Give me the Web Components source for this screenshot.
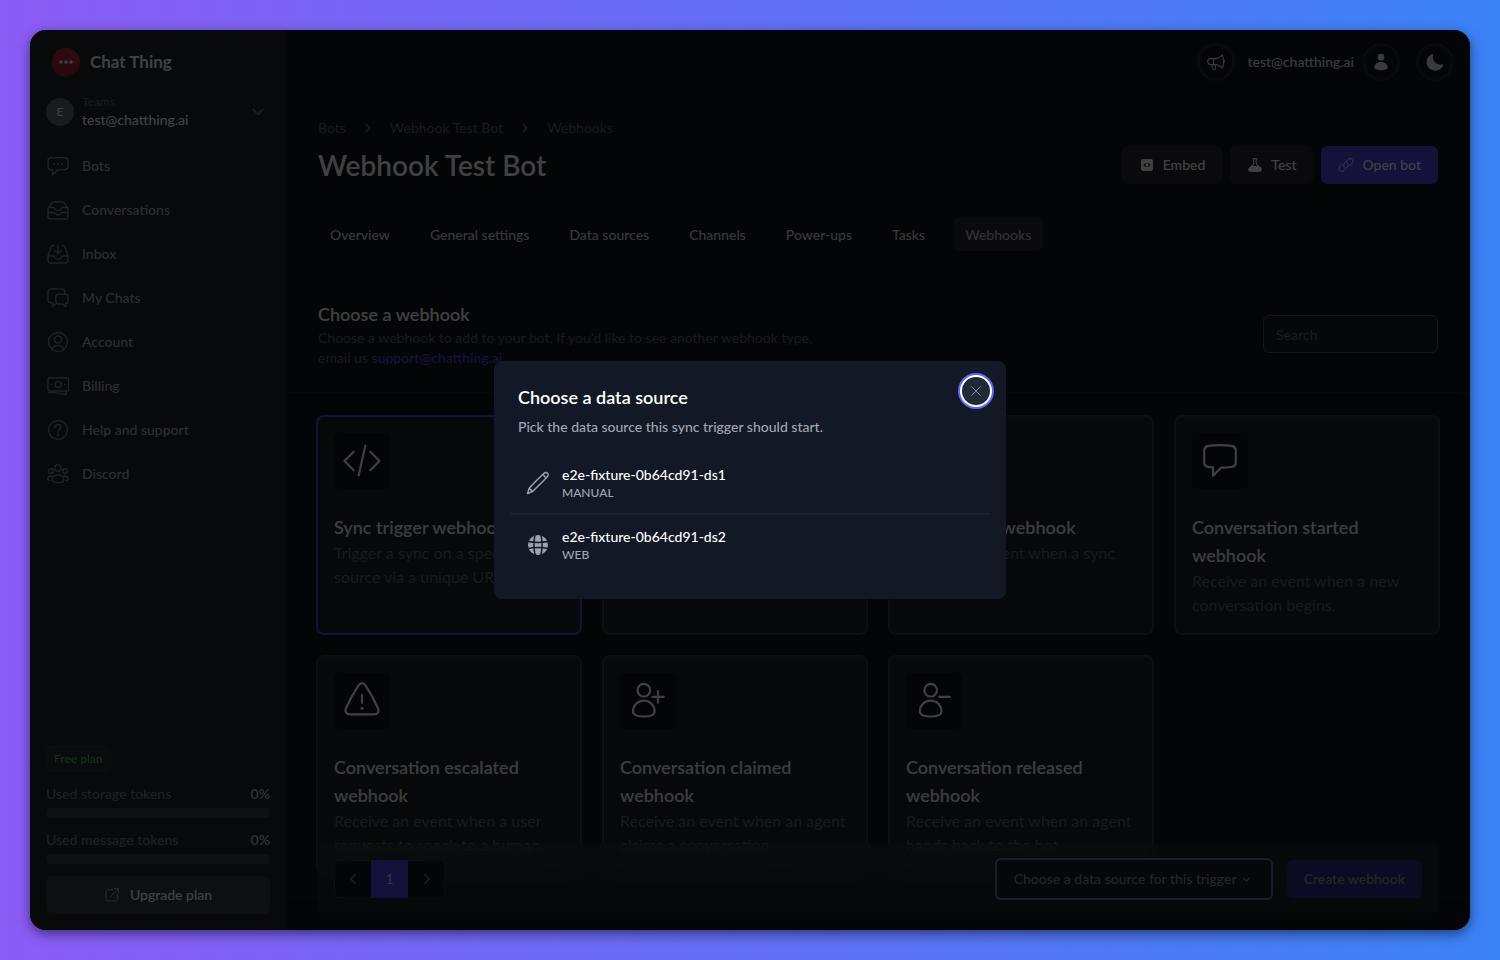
<!DOCTYPE html>
<html lang="en">
<head>
<meta charset="utf-8">
<title>Webhook Test Bot - Chat Thing</title>
<style>
  body {
    --page: #10141e;
    --panel: #20242f;
    --line: #34383f;
    --button: #3b3e46;
    --text: #fff;
    --soft: #b4b5b9;
    --muted: #7c7e85;
    --faint: #62646b;
    --brand: #5044e5;
    margin: 0;
    min-height: 100vh;
    box-sizing: border-box;
    padding: 30px;
    background: linear-gradient(to right, #8b5cf6, #3b82f6);
    font: 500 14px/20px Lato, sans-serif;
    color: var(--text);
  }
</style>
</head>
<body>
<chat-app></chat-app>

<script>
const ICONS = {
  bots: '<path d="M12 3.500c-3 0-5.500.1-7.200.3C3.200 4 2 5.200 2 6.800v5.800c0 1.700 1.200 2.900 2.800 3l1.700.2v5.200l4.900-5c2.900 0 5.600-.1 7.800-.4 1.600-.2 2.800-1.400 2.800-3V6.800c0-1.600-1.200-2.800-2.800-3C17.500 3.600 15 3.500 12 3.500z"/><path d="M8 10h.01M12 10h.01M16 10h.01" stroke-width="2"/>',
  conversations: '<path d="M2.500 9.500 6.500 4.500C7 4 7.500 4 8 4h8c.5 0 1 0 1.500.5l4 5M2.500 9.500h5c.8 0 1.300.5 1.600 1.200.5 1.100 1.500 1.800 2.900 1.800s2.400-.7 2.900-1.800c.3-.7.8-1.200 1.600-1.200h5M2 14.500h5.500c.8 0 1.300.5 1.600 1 .6.900 1.500 1.500 2.900 1.500s2.300-.6 2.900-1.500c.3-.5.8-1 1.600-1H22M2 10v8.500A2.500 2.500 0 0 0 4.500 21h15a2.500 2.500 0 0 0 2.500-2.500V10"/>',
  inbox: '<path d="M8 3.500H7c-1 0-1.500.5-1.800 1.300L2 14v4.500A2.500 2.500 0 0 0 4.500 21h15a2.500 2.500 0 0 0 2.500-2.500V14l-3.200-9.200C18.500 4 18 3.500 17 3.500h-1M2 14h5c.8 0 1.300.5 1.600 1.200.6 1.200 1.600 2 3.400 2s2.800-.8 3.400-2c.3-.7.8-1.200 1.600-1.200h5M12 3v8.500M8.800 8.500l3.200 3 3.200-3"/>',
  chats: '<path d="M9.500 18 7 20.500V17c-1 0-1.800 0-2.600-.2C3 16.600 2 15.500 2 14V5.800c0-1.400 1-2.500 2.400-2.700 4-.5 8-.5 12 0 1.400.2 2.400 1.300 2.400 2.700v2"/><path d="M12.500 8.200h7c1.400 0 2.500 1 2.500 2.500v4.600c0 1.500-1 2.500-2.500 2.600v2.800l-3-2.700h-3.800c-1.700 0-2.900-1-2.900-2.700v-4.400c0-1.600 1.100-2.700 2.700-2.700z"/>',
  account: '<circle cx="12" cy="12" r="9.500"/><circle cx="12" cy="9.500" r="3.500"/><path d="M5.800 19c1-2.400 3.300-3.400 6.200-3.400s5.200 1 6.200 3.400"/>',
  billing: '<rect x="2" y="4" width="20.500" height="13" rx="1.500"/><circle cx="12.200" cy="10.500" r="3"/><path d="M5.500 10.500h.6M18.500 10.500h.6M2.500 18.500c6-.5 11 .5 16 2 1 .3 1.500-.2 1.500-1v-2"/>',
  help: '<circle cx="12" cy="12" r="9.500"/><path d="M9 9.500c0-1.800 1.300-3 3-3s3 1.100 3 2.700c0 2.300-3 2.500-3 5"/><path d="M12 17.300h.01" stroke-width="2"/>',
  discord: '<circle cx="12" cy="6" r="3.200"/><circle cx="5" cy="9" r="2.300"/><circle cx="19" cy="9" r="2.300"/><path d="M6.300 18.300c0-3.300 2.400-5.600 5.700-5.600s5.700 2.300 5.700 5.600c0 1.400-2.500 2.300-5.700 2.300s-5.700-.9-5.700-2.300zM6 14.200c-2.300-.6-4.300.6-4.300 2.800 0 .8.800 1.300 2.200 1.500M18 14.200c2.300-.6 4.300.6 4.300 2.800 0 .8-.8 1.300-2.200 1.500"/>',
  external: '<path d="M13 4H5.500C4.200 4 3 5.200 3 6.500v12C3 19.800 4.200 21 5.500 21h12c1.300 0 2.500-1.200 2.500-2.500V11M9 15 21.500 2.500M15.500 2.500h6v6"/>',
  down: '<path d="m4 8 8 8 8-8"/>',
  right: '<path d="m8 4 8 8-8 8"/>',
  left: '<path d="m16 4-8 8 8 8"/>',
  close: '<path d="M3 3 21 21M21 3 3 21"/>',
  horn: '<path d="M5 7.500h5.500c4 0 7-1.800 10-5 1.800 5 1.800 12.500 0 17.500-3-3-6-4.500-10-4.500H5c-2.200 0-4-1.700-4-4s1.800-4 4-4zM9.500 7.500c-1 2.500-1 5.500 0 8M6.500 15.800l1.300 5c.3 1.200 1.200 1.900 2.400 1.600 1.100-.3 1.600-1.300 1.300-2.400l-1-4.200M22 8.500c1.500 1 1.500 4 0 5"/>',
  person: '<g fill="currentColor" stroke="none"><circle cx="12" cy="5.500" r="4.500"/><path d="M12 12c5 0 9 3.400 9 7 0 2.500-4 4-9 4s-9-1.500-9-4c0-3.600 4-7 9-7z"/></g>',
  moon: '<path fill="currentColor" stroke="none" d="M9.500 1A11.500 11.500 0 1 0 23.500 14.500C17 18 6.500 12 9.500 1z"/>',
  embed: '<path fill="currentColor" stroke="none" fill-rule="evenodd" d="M6 3h12c1.700 0 3 1.300 3 3v12c0 1.700-1.300 3-3 3H6c-1.700 0-3-1.300-3-3V6c0-1.700 1.300-3 3-3zm4 5.500L6.500 12l3.500 3.500 1.300-1.300L9.100 12l2.200-2.200zm4 0-1.300 1.300 2.200 2.200-2.200 2.200 1.300 1.300 3.500-3.500z"/>',
  flask: '<path fill="currentColor" stroke="none" fill-rule="evenodd" d="M8 2h8v1.500h-1.500V9c1 3 3.500 4 6.500 7 2.500 3 1.500 5.500-2 6-4.500.6-9.500.6-14 0-3.500-.5-4.500-3-2-6 3-3 5.500-4 6.500-7V3.500H8zm3 1.500V9c-.4 1.700-1.300 3.200-2.500 4.500h7C14.300 12.200 13.400 10.700 13 9V3.500z"/>',
  link: '<path d="M10 15.500c-2-1.800-2-4.200-.2-6.200l5-5.300c1.900-2 4.500-2.200 6.300-.5s1.800 4.300-.2 6.300l-3.300 3.400M14 8.500c2 1.800 2 4.200.2 6.200l-5 5.300c-1.900 2-4.500 2.200-6.300.5s-1.800-4.300.2-6.300l3.300-3.400"/>',
  code: '<path d="M7 6.500 1.500 12 7 17.500M17 6.500l5.500 5.500-5.500 5.500M14 2.800 10 20.500"/>',
  bubble: '<path d="M12 2.500c-3 0-5 .1-6.800.4-1.700.2-2.700 1.300-2.700 2.900v6.900c0 1.600 1.100 2.700 2.700 2.900l2.600.2v5l4.800-4.800c2.500 0 4.300-.1 6.200-.4 1.600-.2 2.700-1.300 2.700-2.900V5.800c0-1.600-1-2.700-2.700-2.900C17 2.600 15 2.500 12 2.500z"/>',
  warning: '<path d="M10 2.500c.9-1.400 3.100-1.400 4 0 3 4.500 5.500 9.200 7.700 14 .7 1.800-.4 3.500-2.400 3.500H4.700c-2 0-3.100-1.700-2.400-3.500 2.200-4.800 4.700-9.500 7.700-14zM12 8.500v4.700"/><path d="M12 16.300h.01" stroke-width="1.800"/>',
  userplus: '<circle cx="9.500" cy="5.500" r="3.800"/><path d="M9.500 11.800c4 0 6.500 3.200 6.500 6.500 0 2-2.800 3-6.500 3s-6.500-1-6.500-3c0-3.300 2.500-6.500 6.500-6.500zM18 6v7M14.700 9.500h6.800"/>',
  userminus: '<circle cx="10" cy="5.500" r="3.800"/><path d="M10 11.800c4 0 6.500 3.200 6.500 6.500 0 2-2.800 3-6.500 3s-6.500-1-6.500-3c0-3.300 2.500-6.500 6.500-6.500zM15.200 9.500h6.300"/>',
  pencil: '<path d="M1.500 22.500 3 17.500C8 12 12.500 7.500 18 2.200c1.200-1.100 2.700-.9 3.500 0s1 2.200 0 3.300C16 11.500 11.500 16 6.500 20.500zM17.800 2.800c-.6 1.800 1 3.800 3 3.300M3 17.500c1 .5 2.500 1.700 3.500 3"/>',
  globe: '<circle cx="12" cy="12" r="10" fill="currentColor" stroke="none"/><path stroke="#121825" stroke-width="1.500" d="M9.300 1c-1.800 7-1.800 15 0 22M14.700 1c1.800 7 1.800 15 0 22M1 8.300c7 1.500 15 1.500 22 0M1 15.700c7-1.500 15-1.500 22 0"/>',
};

class AppIcon extends HTMLElement {
  constructor() {
    super();
    this.attachShadow({mode: 'open'});
  }

  connectedCallback() {
    this.shadowRoot.innerHTML = `
      <style>
        :host {
          display: inline-flex;
          flex: none;
          width: var(--icon-size, 24px);
          height: var(--icon-size, 24px);
        }
        svg {
          width: 100%;
          height: 100%;
          overflow: visible;
          fill: none;
          stroke: currentColor;
          stroke-width: var(--icon-stroke, 1.400);
          stroke-linecap: round;
          stroke-linejoin: round;
        }
      </style>
      <svg viewBox="0 0 24 24" aria-hidden="true">${ICONS[this.getAttribute('name')]}</svg>
    `;
  }
}
customElements.define('app-icon', AppIcon);

class NavItem extends HTMLElement {
  constructor() {
    super();
    this.attachShadow({mode: 'open'}).innerHTML = `
      <style>
        :host { display: block; }
        a {
          display: flex;
          align-items: center;
          gap: 12px;
          height: 44px;
          color: var(--soft);
          text-decoration: none;
        }
        app-icon { color: #84868d; }
      </style>
      <a href="#"><app-icon name="${this.getAttribute('icon')}"></app-icon><slot></slot></a>
    `;
  }
}
customElements.define('nav-item', NavItem);

class UsageMeter extends HTMLElement {
  constructor() {
    super();
    this.attachShadow({mode: 'open'}).innerHTML = `
      <style>
        :host { display: block; }
        .row {
          display: flex;
          justify-content: space-between;
          color: var(--muted);
          margin-bottom: 4px;
        }
        b { color: #c4c4c6; font-weight: 600; }
        .track {
          height: 10px;
          border-radius: 4px;
          background: var(--button);
        }
      </style>
      <div class="row"><span id="label"><slot></slot></span><b>0%</b></div>
      <div class="track" role="progressbar" aria-labelledby="label" aria-valuenow="0"></div>
    `;
  }
}
customElements.define('usage-meter', UsageMeter);

class AppButton extends HTMLElement {
  constructor() {
    super();
    this.attachShadow({mode: 'open'}).innerHTML = `
      <style>
        :host {
          display: block;
          --icon-size: 16px;
        }
        button {
          display: flex;
          align-items: center;
          justify-content: center;
          gap: 8px;
          width: 100%;
          height: 38px;
          padding: 0 17px;
          border: 0;
          border-radius: 6px;
          background: #282b33;
          color: var(--text);
          font: inherit;
          white-space: nowrap;
        }
        :host([kind="brand"]) button { background: var(--brand); }
        :host([kind="off"]) button { background: #34288a; color: #9a9a9e; }
        :host([kind="wide"]) button { background: var(--button); gap: 10px; }
      </style>
      <button type="button"><slot></slot></button>
    `;
  }
}
customElements.define('app-button', AppButton);

class SideBar extends HTMLElement {
  constructor() {
    super();
    this.attachShadow({mode: 'open'}).innerHTML = `
      <style>
        :host {
          display: flex;
          flex-direction: column;
          flex: none;
          box-sizing: border-box;
          width: 256px;
          padding: 16px;
          background: var(--panel);
        }
        .brand {
          display: flex;
          align-items: center;
          gap: 8px;
          height: 32px;
          padding-left: 4px;
          font-size: 17px;
          font-weight: 700;
        }
        .brand svg { width: 32px; height: 32px; }
        .team {
          display: flex;
          align-items: center;
          gap: 8px;
          height: 36px;
          margin: 16px 0 14px;
          padding: 0 5px 0 0;
          border: 0;
          background: none;
          color: var(--text);
          font: inherit;
          text-align: left;
          --icon-size: 14px;
          --icon-stroke: 3;
        }
        .team app-icon { margin-left: auto; color: #76787f; }
        .avatar {
          display: grid;
          place-items: center;
          width: 28px;
          height: 28px;
          border-radius: 50%;
          background: #686b73;
          font-size: 12px;
        }
        small {
          display: block;
          font-size: 12px;
          line-height: 16px;
          color: var(--faint);
        }
        .plan {
          align-self: flex-start;
          margin-top: auto;
          padding: 1px 7px;
          border: 1px solid #1c4a34;
          border-radius: 6px;
          background: #233133;
          color: #5fbb6c;
          font-size: 12px;
          line-height: 22px;
        }
        usage-meter { margin-top: 12px; }
        app-button { margin-top: 12px; }
        app-button app-icon { color: #b0b0b4; }
      </style>
      <div class="brand">
        <svg viewBox="0 0 32 32" aria-hidden="true">
          <defs>
            <linearGradient id="blob" x1="0" y1="1" x2="1" y2="0">
              <stop offset="0" stop-color="#a02048"/>
              <stop offset="1" stop-color="#b83038"/>
            </linearGradient>
          </defs>
          <path fill="#8c2034" opacity=".3" d="M17 4c8 0 14 6 14 13s-5 14-13 14S4 25 4 18 9 4 17 4z"/>
          <path fill="url(#blob)" d="M14 2c8-1.500 15 5 16 13 0 8-5 14-13 15C9 31 2 26 2 18 1 9 7 3 14 2z"/>
          <g fill="#fff"><circle cx="11" cy="16" r="1.700"/><circle cx="16" cy="16" r="1.700"/><circle cx="21" cy="16" r="1.700"/></g>
        </svg>
        Chat Thing
      </div>
      <button class="team" type="button">
        <span class="avatar">E</span>
        <span><small>Teams</small>test@chatthing.ai</span>
        <app-icon name="down"></app-icon>
      </button>
      <nav>
        <nav-item icon="bots">Bots</nav-item>
        <nav-item icon="conversations">Conversations</nav-item>
        <nav-item icon="inbox">Inbox</nav-item>
        <nav-item icon="chats">My Chats</nav-item>
        <nav-item icon="account">Account</nav-item>
        <nav-item icon="billing">Billing</nav-item>
        <nav-item icon="help">Help and support</nav-item>
        <nav-item icon="discord">Discord</nav-item>
      </nav>
      <span class="plan">Free plan</span>
      <usage-meter>Used storage tokens</usage-meter>
      <usage-meter>Used message tokens</usage-meter>
      <app-button kind="wide"><app-icon name="external"></app-icon>Upgrade plan</app-button>
    `;
  }
}
customElements.define('side-bar', SideBar);

class TopBar extends HTMLElement {
  constructor() {
    super();
    this.attachShadow({mode: 'open'}).innerHTML = `
      <style>
        :host {
          display: flex;
          align-items: center;
          justify-content: flex-end;
          height: 64px;
          padding: 0 16px;
          color: #e8e8ea;
          --icon-size: 18px;
        }
        button {
          display: grid;
          place-items: center;
          width: 38px;
          height: 38px;
          padding: 0;
          border: 3px solid #282a31;
          border-radius: 50%;
          background: none;
          color: inherit;
        }
        span { margin: 0 8px 0 13px; }
        .theme { margin-left: 16px; }
      </style>
      <button type="button" aria-label="News"><app-icon name="horn"></app-icon></button>
      <span>test@chatthing.ai</span>
      <button type="button" aria-label="Profile"><app-icon name="person"></app-icon></button>
      <button class="theme" type="button" aria-label="Theme"><app-icon name="moon"></app-icon></button>
    `;
  }
}
customElements.define('top-bar', TopBar);

class PageHead extends HTMLElement {
  constructor() {
    super();
    this.attachShadow({mode: 'open'}).innerHTML = `
      <style>
        :host {
          display: block;
          padding: 24px 32px 0;
        }
        a { color: inherit; text-decoration: none; }
        .crumbs {
          display: flex;
          align-items: center;
          gap: 16px;
          color: var(--faint);
          font-weight: 400;
          --icon-size: 12px;
          --icon-stroke: 2.500;
        }
        .crumbs app-icon { color: var(--muted); }
        .title {
          display: flex;
          align-items: center;
          gap: 8px;
          margin-top: 8px;
        }
        h1 {
          margin: 0 auto 0 0;
          font-size: 28px;
          line-height: 36px;
          font-weight: 600;
        }
        .tabs {
          display: flex;
          gap: 16px;
          margin-top: 34px;
        }
        .tabs a {
          padding: 6px 12px;
          border-radius: 6px;
          color: #dadadc;
          line-height: 21px;
        }
        .tabs a[aria-current] { background: #282b33; color: #c0c1c4; }
      </style>
      <nav class="crumbs" aria-label="Breadcrumb">
        <a href="#">Bots</a><app-icon name="right"></app-icon>
        <a href="#">Webhook Test Bot</a><app-icon name="right"></app-icon>
        <a href="#">Webhooks</a>
      </nav>
      <div class="title">
        <h1>Webhook Test Bot</h1>
        <app-button><app-icon name="embed"></app-icon>Embed</app-button>
        <app-button><app-icon name="flask"></app-icon>Test</app-button>
        <app-button kind="brand"><app-icon name="link"></app-icon>Open bot</app-button>
      </div>
      <nav class="tabs" aria-label="Bot">
        <a href="#">Overview</a>
        <a href="#">General settings</a>
        <a href="#">Data sources</a>
        <a href="#">Channels</a>
        <a href="#">Power-ups</a>
        <a href="#">Tasks</a>
        <a href="#" aria-current="page">Webhooks</a>
      </nav>
    `;
  }
}
customElements.define('page-head', PageHead);

class WebhookCard extends HTMLElement {
  constructor() {
    super();
    this.attachShadow({mode: 'open'}).innerHTML = `
      <style>
        :host {
          display: block;
          padding: 16px;
          border-radius: 6px;
          background: #1e212a;
          box-shadow: 0 0 0 2px var(--line);
        }
        :host([selected]) { box-shadow: 0 0 0 2px var(--brand); }
        .icon {
          display: grid;
          place-items: center;
          width: 56px;
          height: 56px;
          border-radius: 6px;
          background: #11141b;
          --icon-size: 40px;
          --icon-stroke: 1.300;
        }
        h3 {
          margin: 24px 0 0;
          font-size: 18px;
          line-height: 28px;
          font-weight: 600;
          color: #f0f0f2;
        }
        p {
          margin: 0;
          font-size: 16px;
          line-height: 24px;
          font-weight: 400;
          color: var(--faint);
        }
      </style>
      <div class="icon"><app-icon name="${this.getAttribute('icon')}"></app-icon></div>
      <h3><slot name="title"></slot></h3>
      <p><slot></slot></p>
    `;
  }
}
customElements.define('webhook-card', WebhookCard);

class WebhookPicker extends HTMLElement {
  constructor() {
    super();
    this.attachShadow({mode: 'open'}).innerHTML = `
      <style>
        :host { display: block; }
        header {
          display: flex;
          align-items: center;
          justify-content: space-between;
          padding: 49px 32px 24px;
        }
        h2 {
          margin: 0;
          font-size: 18px;
          line-height: 28px;
          font-weight: 600;
        }
        header p {
          max-width: 512px;
          margin: 0;
          font-weight: 400;
          color: var(--faint);
        }
        header a { color: #5347e6; font-weight: 500; text-decoration: none; }
        input {
          box-sizing: border-box;
          width: 175px;
          height: 38px;
          padding: 0 12px;
          border: 1px solid #555861;
          border-radius: 6px;
          background: #1a1d25;
          color: var(--text);
          font: inherit;
        }
        input::placeholder { color: var(--faint); }
        .grid {
          display: grid;
          grid-template-columns: repeat(4, 1fr);
          gap: 24px;
          padding: 24px 32px;
          border: solid #20232b;
          border-width: 1px 0;
        }
      </style>
      <header>
        <div>
          <h2>Choose a webhook</h2>
          <p>Choose a webhook to add to your bot. If you'd like to see another webhook type, email us <a href="#">support@chatthing.ai</a></p>
        </div>
        <input type="search" placeholder="Search" aria-label="Search">
      </header>
      <div class="grid">
        <webhook-card icon="code" selected><span slot="title">Sync trigger webhook</span>Trigger a sync on a specific data source via a unique URL.</webhook-card>
        <webhook-card icon="code"><span slot="title">Sync started webhook</span>Receive an event when a sync starts.</webhook-card>
        <webhook-card icon="code"><span slot="title">Sync ended webhook</span>Receive an event when a sync ends.</webhook-card>
        <webhook-card icon="bubble"><span slot="title">Conversation started webhook</span>Receive an event when a new conversation begins.</webhook-card>
        <webhook-card icon="warning"><span slot="title">Conversation escalated webhook</span>Receive an event when a user requests to speak to a human.</webhook-card>
        <webhook-card icon="userplus"><span slot="title">Conversation claimed webhook</span>Receive an event when an agent claims a conversation.</webhook-card>
        <webhook-card icon="userminus"><span slot="title">Conversation released webhook</span>Receive an event when an agent hands back to the bot.</webhook-card>
      </div>
    `;
  }
}
customElements.define('webhook-picker', WebhookPicker);

class ActionBar extends HTMLElement {
  constructor() {
    super();
    this.attachShadow({mode: 'open'}).innerHTML = `
      <style>
        :host {
          display: flex;
          align-items: center;
          gap: 14px;
          position: sticky;
          bottom: 16px;
          margin: 0 32px;
          padding: 14px 16px;
          border-radius: 6px;
          background: rgba(55, 58, 66, 0.35);
          backdrop-filter: blur(12px);
        }
        .pager {
          display: flex;
          overflow: hidden;
          margin-right: auto;
          border-radius: 6px;
          box-shadow: inset 0 0 0 1px var(--line);
          background: #11141b;
          --icon-size: 14px;
          --icon-stroke: 2;
        }
        .pager button {
          display: grid;
          place-items: center;
          width: 37px;
          height: 38px;
          padding: 0;
          border: 0;
          background: none;
          color: #84868c;
          font: inherit;
        }
        .pager .on { background: var(--brand); color: #c8c8cc; }
        label {
          display: flex;
          align-items: center;
          gap: 4px;
          box-sizing: border-box;
          height: 42px;
          padding: 0 20px 0 17px;
          border: 2px solid #6c6bb0;
          border-radius: 6px;
          background: #1a1d24;
          color: #8e9096;
          --icon-size: 9px;
          --icon-stroke: 3;
        }
        select {
          appearance: none;
          padding: 0;
          border: 0;
          background: none;
          color: inherit;
          font: inherit;
        }
      </style>
      <div class="pager">
        <button type="button" aria-label="Previous page"><app-icon name="left"></app-icon></button>
        <button type="button" class="on">1</button>
        <button type="button" aria-label="Next page"><app-icon name="right"></app-icon></button>
      </div>
      <label>
        <select aria-label="Data source"><option>Choose a data source for this trigger</option></select>
        <app-icon name="down"></app-icon>
      </label>
      <app-button kind="off">Create webhook</app-button>
    `;
  }
}
customElements.define('action-bar', ActionBar);

class SourceItem extends HTMLElement {
  constructor() {
    super();
    this.attachShadow({mode: 'open'}).innerHTML = `
      <style>
        :host { display: block; }
        :host(:not(:last-of-type)) { border-bottom: 2px solid #1a212e; }
        button {
          display: flex;
          align-items: center;
          gap: 12px;
          width: 100%;
          height: 60px;
          padding: 0 16px;
          border: 0;
          background: none;
          color: #fff;
          font: inherit;
          text-align: left;
        }
        app-icon { color: #9ca3af; }
        small {
          display: block;
          font-size: 12px;
          line-height: 16px;
          color: #a3a6b0;
        }
      </style>
      <button type="button">
        <app-icon name="${this.getAttribute('icon')}"></app-icon>
        <span><slot></slot><small>${this.getAttribute('type')}</small></span>
      </button>
    `;
  }
}
customElements.define('source-item', SourceItem);

class SourceDialog extends HTMLElement {
  constructor() {
    super();
    this.attachShadow({mode: 'open'}).innerHTML = `
      <style>
        :host {
          position: absolute;
          inset: 0;
          display: flex;
          align-items: center;
          justify-content: center;
          background: rgba(0, 0, 0, 0.75);
        }
        .box {
          position: relative;
          box-sizing: border-box;
          width: 512px;
          padding: 24px 16px;
          border-radius: 8px;
          background: #121825;
        }
        h2 {
          margin: 0 8px;
          font-size: 18px;
          line-height: 24px;
          font-weight: 600;
        }
        p {
          margin: 8px 8px 16px;
          color: #a3a6b0;
        }
        .close {
          position: absolute;
          top: 16px;
          right: 16px;
          display: grid;
          place-items: center;
          width: 28px;
          height: 28px;
          padding: 0;
          border: 0;
          border-radius: 50%;
          outline: 0;
          background: #202937;
          color: #80858f;
          box-shadow: 0 0 0 2px #fff, 0 0 0 4px #6366f1;
          --icon-size: 12px;
          --icon-stroke: 2;
        }
      </style>
      <div class="box" role="dialog" aria-modal="true" aria-labelledby="heading">
        <h2 id="heading">Choose a data source</h2>
        <p>Pick the data source this sync trigger should start.</p>
        <source-item icon="pencil" type="MANUAL">e2e-fixture-0b64cd91-ds1</source-item>
        <source-item icon="globe" type="WEB">e2e-fixture-0b64cd91-ds2</source-item>
        <button class="close" type="button" aria-label="Close"><app-icon name="close"></app-icon></button>
      </div>
    `;
  }
}
customElements.define('source-dialog', SourceDialog);

class ChatApp extends HTMLElement {
  constructor() {
    super();
    this.attachShadow({mode: 'open'}).innerHTML = `
      <style>
        :host {
          position: relative;
          display: flex;
          height: calc(100vh - 60px);
          overflow: hidden;
          border-radius: 16px;
          background: var(--page);
          box-shadow: 0 4px 12px rgba(0, 0, 0, 0.5);
        }
        main {
          flex: 1;
          min-width: 0;
          overflow: auto;
          scrollbar-width: none;
        }
      </style>
      <side-bar></side-bar>
      <main>
        <top-bar></top-bar>
        <page-head></page-head>
        <webhook-picker></webhook-picker>
        <action-bar></action-bar>
      </main>
      <source-dialog></source-dialog>
    `;
  }
}
customElements.define('chat-app', ChatApp);
</script>
</body>
</html>
